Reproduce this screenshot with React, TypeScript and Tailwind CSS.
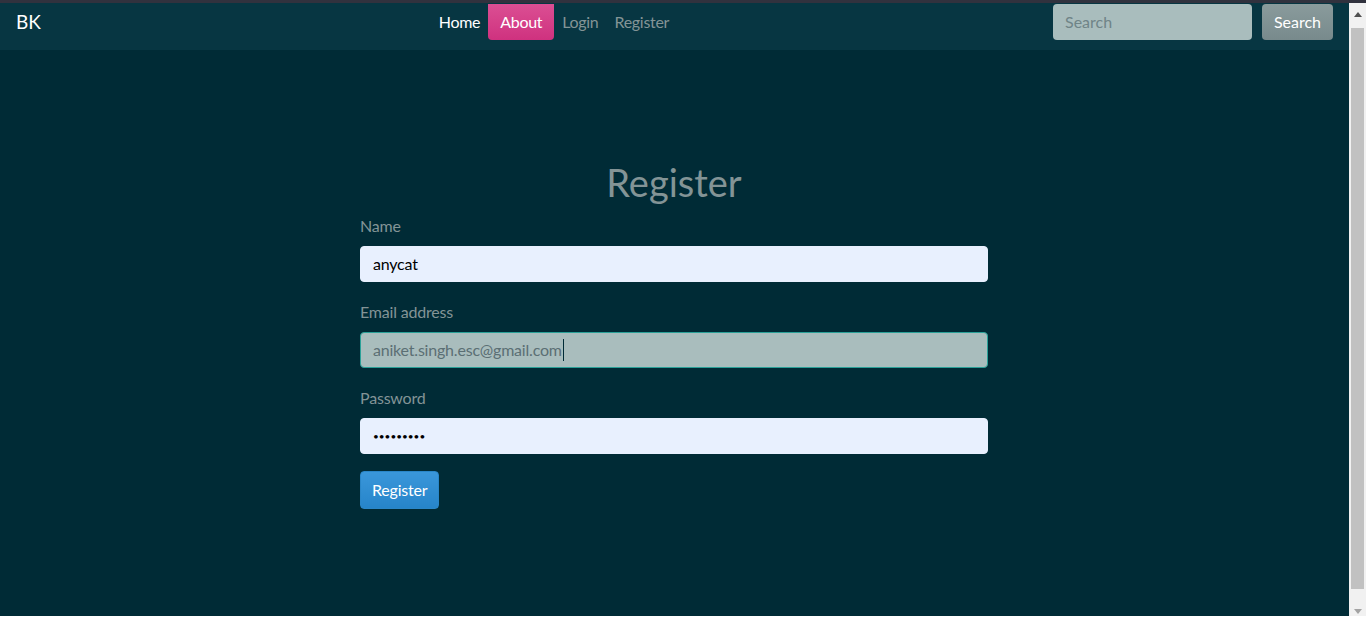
import { useState } from "react";

const font = { fontFamily: "Lato, 'Open Sans', sans-serif" };

function Field({
  label,
  value,
  type = "text",
  focused = false,
  last = false,
}: {
  label: string;
  value: string;
  type?: string;
  focused?: boolean;
  last?: boolean;
}) {
  return (
    <div className={last ? "mb-[17px]" : "mb-[18px]"}>
      <label className="block mb-2 text-[16px] leading-6 text-[#839496] tracking-[-0.2px]">{label}</label>
      <div
        className={
          focused
            ? "h-[36px] rounded flex items-center px-3 bg-[#a9bdbd] border border-[#2aa198] text-[#5b6f74]"
            : "h-[36px] rounded flex items-center px-3 bg-[#e8f0fe] border border-[#e8f0fe] text-black"
        }
      >
        {type === "password" ? (
          <span className="text-[10px] leading-none tracking-[0px]">{"•".repeat(value.length)}</span>
        ) : (
          <span className="text-[16px] tracking-[-0.2px]">{value}</span>
        )}
        {focused && <span className="w-px h-[22px] bg-[#002b36] ml-px" />}
      </div>
    </div>
  );
}

export default function App() {
  const [active] = useState("About");
  const links = ["Home", "About", "Login", "Register"];

  return (
    <div className="h-[618px] w-[1366px] flex flex-col bg-[#002b36] overflow-hidden" style={font}>
      <div className="h-[3px] bg-[#31323e]" />
      <div className="flex-1 flex min-h-0">
        <div className="flex-1 flex flex-col">
          <nav className="h-[47px] bg-[#073642] flex items-start pt-px pl-4 pr-4">
            <div className="h-9 flex items-center text-[19px] text-white">BK</div>
            <ul className="flex-1 flex justify-center items-start pl-[14px]">
              {links.map((l) => (
                <li
                  key={l}
                  className={
                    l === active
                      ? "h-9 flex items-center px-[12px] rounded-b bg-gradient-to-b from-[#db4e93] to-[#cf317f] text-white text-[16px] tracking-[-0.3px]"
                      : l === "Home"
                        ? "h-9 flex items-center px-2 text-white text-[16px] tracking-[-0.3px]"
                        : "h-9 flex items-center px-2 text-[#839496] text-[16px] tracking-[-0.3px]"
                  }
                >
                  {l}
                </li>
              ))}
            </ul>
            <div className="flex items-start gap-[10px]">
              <div className="w-[199px] h-9 rounded bg-[#a9bdbd] flex items-center px-3 text-[16px] text-[#6f8487]">
                Search
              </div>
              <button className="w-[71px] h-9 rounded bg-gradient-to-b from-[#8a9b9c] to-[#788a8c] text-white text-[16px]">
                Search
              </button>
            </div>
          </nav>

          <main className="flex justify-center pt-[108px] pr-px">
            <div className="w-[628px]">
              <h1 className="text-center text-[38px] leading-[48px] mb-2 text-[#839496]">Register</h1>
              <Field label="Name" value="anycat" />
              <Field label="Email address" value="aniket.singh.esc@gmail.com" focused />
              <Field label="Password" value="123456789" type="password" last />
              <button className="h-[38px] px-[11px] rounded bg-gradient-to-b from-[#3a97da] to-[#2685ca] border border-[#2a86c8] text-white text-[16px] tracking-[-0.2px]">
                Register
              </button>
            </div>
          </main>
        </div>

        <div className="w-[17px] bg-[#f1f1f1] flex flex-col items-center">
          <div className="h-[22px] flex items-center justify-center">
            <svg width="8" height="5" viewBox="0 0 8 5">
              <path d="M0 5 L4 0 L8 5 Z" fill="#505050" />
            </svg>
          </div>
          <div className="w-[13px] flex-1 bg-[#c1c1c1] mt-[3px] mb-[17px]" />
          <div className="h-[10px] flex items-center justify-center">
            <svg width="8" height="5" viewBox="0 0 8 5">
              <path d="M0 0 L4 5 L8 0 Z" fill="#a3a3a3" />
            </svg>
          </div>
        </div>
      </div>
      <div className="h-[2px] bg-white" />
    </div>
  );
}
